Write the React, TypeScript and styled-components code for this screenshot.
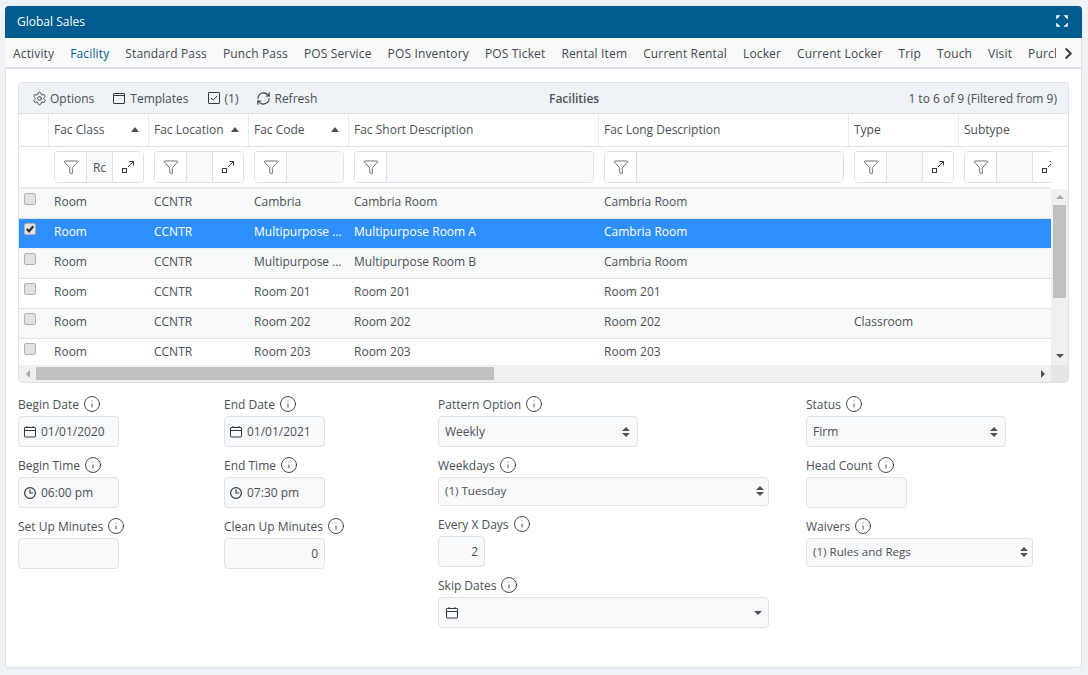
import React from "react";
import styled, { createGlobalStyle } from "styled-components";
import { Settings, RefreshCw, Funnel, Info } from "lucide-react";
import { FaChevronRight } from "react-icons/fa";

const Global = createGlobalStyle`
  html, body { margin: 0; padding: 0; background: #eff2f7; }
  body { font-family: "Open Sans", "Liberation Sans", sans-serif; font-size: 12px; color: #495057; }
  * { box-sizing: border-box; }
`;

const Page = styled.div`
  width: 1088px;
  height: 675px;
  padding: 6px 6px 7px 5px;
  overflow: hidden;
`;
const Panel = styled.section`
  height: 100%;
  display: flex;
  flex-direction: column;
  background: #fff;
  border: 1px solid #dee2e6;
  border-top: 0;
  border-radius: 4px;
`;
const TitleBar = styled.header`
  height: 32px;
  flex: none;
  margin: 0 -1px;
  padding: 0 14px 2px 12px;
  display: flex;
  align-items: center;
  justify-content: space-between;
  background: #005c8f;
  color: #fff;
  font-size: 12px;
  font-weight: 500;
  border-radius: 4px 4px 0 0;
`;
const TabBar = styled.nav`
  height: 31px;
  flex: none;
  margin-left: -1px;
  display: flex;
  align-items: stretch;
  background: #f8f9fa;
  border-bottom: 2px solid #dee2e6;
`;
const TabScroll = styled.div`
  width: 1051px;
  flex: none;
  display: flex;
  overflow: hidden;
`;
const Tab = styled.div<{ $active?: boolean }>`
  flex: none;
  height: 31px;
  padding: 2px 8px 0;
  display: flex;
  align-items: center;
  font-size: 12px;
  font-weight: 500;
  letter-spacing: 0.15px;
  white-space: nowrap;
  color: ${(p) => (p.$active ? "#005c8f" : "#41484f")};
  border-bottom: 2px solid ${(p) => (p.$active ? "#005c8f" : "transparent")};
`;
const TabNext = styled.div`
  flex: 1;
  display: flex;
  align-items: center;
  justify-content: center;
  padding-top: 1px;
  color: #343a40;
`;
const Content = styled.div`
  flex: 1;
  padding: 13px 12px 0 12px;
  display: flex;
  flex-direction: column;
`;
const Grid = styled.div`
  width: 1051px;
  height: 301px;
  flex: none;
  border: 1px solid #dee2e6;
  border-radius: 4px;
  display: flex;
  flex-direction: column;
  overflow: hidden;
  background: #fff;
`;
const Toolbar = styled.div`
  height: 31px;
  flex: none;
  background: #eff2f7;
  border-bottom: 1px solid #dee2e6;
  display: flex;
  align-items: center;
  padding: 0 11px 0 13px;
`;
const ToolGroup = styled.div`
  width: 517px;
  flex: none;
  display: flex;
  align-items: center;
  gap: 18px;
`;
const ToolButton = styled.div`
  display: flex;
  align-items: center;
  gap: 3px;
  font-size: 12px;
  font-weight: 500;
  white-space: nowrap;
  svg { flex: none; color: #343a40; }
`;
const GridTitle = styled.div`
  font-size: 12px;
  font-weight: 600;
`;
const Pager = styled.div`
  margin-left: auto;
  font-size: 12px;
  font-weight: 500;
  white-space: nowrap;
`;
const HeaderRow = styled.div`
  height: 33px;
  flex: none;
  display: flex;
  overflow: hidden;
  border-bottom: 1px solid #dee2e6;
`;
const HeaderCell = styled.div<{ $w: number }>`
  flex: 0 0 ${(p) => p.$w}px;
  display: flex;
  align-items: center;
  justify-content: space-between;
  padding: 0 9px 1px 5px;
  font-size: 12px;
  font-weight: 500;
  white-space: nowrap;
  border-right: 1px solid #e9ecef;
`;
const SortUp = styled.span`
  width: 0;
  height: 0;
  border: 4px solid transparent;
  border-top: 0;
  border-bottom: 5px solid #495057;
`;
const FilterViewport = styled.div`
  width: 1032px;
  height: 42px;
  flex: none;
  display: flex;
  overflow: hidden;
  border-bottom: 2px solid #e9ecef;
`;
const FilterCell = styled.div<{ $w: number }>`
  flex: 0 0 ${(p) => p.$w}px;
  padding: 4px 5px;
`;
const FilterBox = styled.div`
  height: 32px;
  display: flex;
  border: 1px solid #dee2e6;
  border-radius: 4px;
  overflow: hidden;
`;
const FilterIcon = styled.div<{ $w: number }>`
  flex: 0 0 ${(p) => p.$w}px;
  display: flex;
  align-items: center;
  justify-content: center;
  background: #fff;
  color: #343a40;
`;
const FilterInput = styled.div`
  flex: 1;
  min-width: 0;
  overflow: hidden;
  display: flex;
  align-items: center;
  justify-content: center;
  background: #f8f9fa;
  border-left: 1px solid #dee2e6;
  border-right: 1px solid #dee2e6;
  font-size: 12px;
  font-weight: 500;
  &:last-child { border-right: 0; }
`;
const BodyArea = styled.div`
  height: 176px;
  flex: none;
  display: flex;
`;
const Rows = styled.div`
  width: 1032px;
  flex: none;
  overflow: hidden;
`;
const Row = styled.div<{ $kind: "odd" | "even" | "sel" }>`
  height: 30px;
  display: flex;
  align-items: center;
  padding-bottom: 4px;
  font-size: 12px;
  font-weight: 500;
  border-bottom: 1px solid ${(p) => (p.$kind === "sel" ? "#eef1f5" : "#dee2e6")};
  color: ${(p) => (p.$kind === "sel" ? "#fff" : "#495057")};
  background: ${(p) => (p.$kind === "sel" ? "#2e8fff" : p.$kind === "odd" ? "#f8f9f9" : "#fff")};
`;
const Cell = styled.div<{ $w: number }>`
  flex: 0 0 ${(p) => p.$w}px;
  padding: 0 5px;
  overflow: hidden;
  text-overflow: ellipsis;
  white-space: nowrap;
`;
const CheckCell = styled.div`
  flex: 0 0 30px;
  align-self: flex-start;
  padding: 4px 0 0 5px;
`;
const CheckBox = styled.span`
  display: flex;
  align-items: center;
  justify-content: center;
  width: 12px;
  height: 12px;
  background: #e1e1e1;
  border: 1px solid #b5b0b0;
  border-radius: 2px;
`;
const VScroll = styled.div`
  flex: 1;
  display: flex;
  flex-direction: column;
  align-items: center;
  justify-content: space-between;
  background: #f0f0f0;
  padding: 6px 0 7px;
`;
const VThumb = styled.div`
  width: 13px;
  height: 93px;
  background: #c0c0c0;
  margin-top: 6px;
  margin-bottom: auto;
`;
const HScroll = styled.div`
  height: 17px;
  flex: none;
  display: flex;
  align-items: center;
  background: #f0f0f0;
`;
const HArrow = styled.div`
  flex: 0 0 17px;
  display: flex;
  justify-content: center;
`;
const HThumb = styled.div`
  width: 458px;
  height: 13px;
  background: #c0c0c0;
`;
const HTrack = styled.div`
  flex: 1;
`;
const Arrow = styled.span<{ $dir: "up" | "down" | "left" | "right"; $light?: boolean }>`
  display: block;
  width: 0;
  height: 0;
  border: 4px solid transparent;
  ${(p) => {
    const c = p.$light ? "#a9a6a8" : "#505050";
    if (p.$dir === "up") return `border-top:0;border-bottom:4px solid ${c};`;
    if (p.$dir === "down") return `border-bottom:0;border-top:4px solid ${c};`;
    if (p.$dir === "left") return `border-left:0;border-right:4px solid ${c};`;
    return `border-right:0;border-left:4px solid ${c};`;
  }}
`;
const Corner = styled.div`
  flex: 0 0 17px;
  height: 17px;
  background: #e4e6e8;
`;
const Form = styled.div`
  margin-top: 9px;
  display: grid;
  grid-template-columns: 206px 214px 368px 1fr;
`;
const FormColumn = styled.div`
  display: flex;
  flex-direction: column;
`;
const Field = styled.div`
  margin-bottom: 6px;
`;
const Label = styled.div`
  height: 24px;
  display: flex;
  align-items: center;
  gap: 4px;
  font-size: 12px;
  font-weight: 500;
  white-space: nowrap;
  svg { flex: none; color: #212529; }
`;
const Control = styled.div<{ $w: number; $right?: boolean; $tight?: boolean }>`
  width: ${(p) => p.$w}px;
  height: ${(p) => (p.$tight ? 29 : 31)}px;
  display: flex;
  align-items: center;
  justify-content: ${(p) => (p.$right ? "flex-end" : "space-between")};
  padding: ${(p) => (p.$tight ? "0 4px 2px 6px" : "0 6px")};
  background: #f8f9fa;
  border: 1px solid #dee2e6;
  border-radius: 4px;
  font-size: ${(p) => (p.$tight ? 11.6 : 12)}px;
  font-weight: 500;
  svg { flex: none; color: #343a40; }
`;
const WithIcon = styled.span`
  display: flex;
  align-items: center;
  gap: 3px;
  margin-left: -3px;
`;
const SkipIcon = styled.span`
  display: flex;
  margin-left: -1px;
`;
const Spinner = styled.span<{ $tight?: boolean }>`
  display: flex;
  flex-direction: column;
  gap: 2px;
  margin-right: ${(p) => (p.$tight ? 0 : 1)}px;
`;
const Caret = styled.span`
  width: 0;
  height: 0;
  border: 4px solid transparent;
  border-bottom: 0;
  border-top: 4px solid #495057;
`;

const FullscreenIcon = () => (
  <svg width="12" height="12" viewBox="0 0 12 12" fill="#fff" stroke="#fff" strokeWidth="0.5">
    <path d="M.5.5h3.5l-3.5 3.5zM11.5.5v3.5l-3.5-3.5zM11.5 11.5h-3.5l3.5-3.5zM.5 11.5v-3.5l3.5 3.5z" />
  </svg>
);
const ExpandIcon = () => (
  <svg width="14" height="14" viewBox="0 0 14 14" fill="none" stroke="#343a40" strokeWidth="1">
    <rect x="1.5" y="8.5" width="4" height="4" />
    <path d="M7 7l5.5-5.5M8.5 1.5h4v4" />
  </svg>
);
const WindowIcon = () => (
  <svg width="15" height="15" viewBox="0 0 15 15" fill="none" stroke="#343a40" strokeWidth="1">
    <rect x="1.5" y="2.5" width="11" height="10" rx=".5" />
    <path d="M1.5 4.5h11" />
  </svg>
);
const CheckSquareIcon = () => (
  <svg width="15" height="15" viewBox="0 0 15 15" fill="none" stroke="#343a40" strokeWidth="1">
    <rect x="1.5" y="1.5" width="11" height="11" rx=".5" />
    <path d="M4 7l2.2 2.2L10 5" />
  </svg>
);
const CalendarIcon = () => (
  <svg width="16" height="16" viewBox="0 0 16 16" fill="none" stroke="#343a40" strokeWidth="1">
    <rect x="2.5" y="3.5" width="11" height="9.5" rx=".5" />
    <path d="M2.5 6.5h11M5 2v1.5M11 2v1.5" />
  </svg>
);
const ClockIcon = () => (
  <svg width="16" height="16" viewBox="0 0 16 16" fill="none" stroke="#343a40" strokeWidth="1.2">
    <circle cx="8" cy="8" r="5.4" />
    <path d="M8 4.5V8h3.2" />
  </svg>
);
const UpDown = ({ tight }: { tight?: boolean }) => (
  <Spinner $tight={tight}>
    <Arrow $dir="up" />
    <Arrow $dir="down" />
  </Spinner>
);
const Check = () => (
  <svg width="10" height="10" viewBox="0 0 11 11" fill="none" stroke="#333" strokeWidth="2.4">
    <path d="M2 5.5l2.5 2.5L9 2.5" />
  </svg>
);
const Hint = () => <Info size={18} strokeWidth={1.1} />;

const columns = [
  { title: "Fac Class", w: 100, sort: true, expand: true, value: "Rc" },
  { title: "Fac Location", w: 100, sort: true, expand: true, value: "" },
  { title: "Fac Code", w: 100, sort: true, expand: false, value: "" },
  { title: "Fac Short Description", w: 250, sort: false, expand: false, value: "" },
  { title: "Fac Long Description", w: 250, sort: false, expand: false, value: "" },
  { title: "Type", w: 110, sort: false, expand: true, value: "" },
  { title: "Subtype", w: 110, sort: false, expand: true, value: "" },
];

const rows = [
  ["Room", "CCNTR", "Cambria", "Cambria Room", "Cambria Room", ""],
  ["Room", "CCNTR", "Multipurpose Room A", "Multipurpose Room A", "Cambria Room", ""],
  ["Room", "CCNTR", "Multipurpose Room B", "Multipurpose Room B", "Cambria Room", ""],
  ["Room", "CCNTR", "Room 201", "Room 201", "Room 201", ""],
  ["Room", "CCNTR", "Room 202", "Room 202", "Room 202", "Classroom"],
  ["Room", "CCNTR", "Room 203", "Room 203", "Room 203", ""],
];

const tabs = ["Activity", "Facility", "Standard Pass", "Punch Pass", "POS Service", "POS Inventory", "POS Ticket", "Rental Item", "Current Rental", "Locker", "Current Locker", "Trip", "Touch", "Visit", "Purchase"];

export default function App() {
  return (
    <Page>
      <Global />
      <Panel>
        <TitleBar>
          <span>Global Sales</span>
          <FullscreenIcon />
        </TitleBar>
        <TabBar>
          <TabScroll>
            {tabs.map((t) => (
              <Tab key={t} $active={t === "Facility"}>{t}</Tab>
            ))}
          </TabScroll>
          <TabNext><FaChevronRight size={13} /></TabNext>
        </TabBar>
        <Content>
          <Grid>
            <Toolbar>
              <ToolGroup>
                <ToolButton><Settings size={15} strokeWidth={1.4} />Options</ToolButton>
                <ToolButton><WindowIcon />Templates</ToolButton>
                <ToolButton><CheckSquareIcon />(1)</ToolButton>
                <ToolButton><RefreshCw size={15} strokeWidth={1.7} />Refresh</ToolButton>
              </ToolGroup>
              <GridTitle>Facilities</GridTitle>
              <Pager>1 to 6 of 9 (Filtered from 9)</Pager>
            </Toolbar>
            <HeaderRow>
              <HeaderCell $w={30} />
              {columns.map((c) => (
                <HeaderCell key={c.title} $w={c.w}>
                  {c.title}
                  {c.sort && <SortUp />}
                </HeaderCell>
              ))}
            </HeaderRow>
            <FilterViewport>
              <FilterCell $w={30} />
              {columns.map((c) => (
                <FilterCell key={c.title} $w={c.w}>
                  <FilterBox>
                    <FilterIcon $w={31}><Funnel size={16} strokeWidth={1.1} /></FilterIcon>
                    <FilterInput>{c.value}</FilterInput>
                    {c.expand && <FilterIcon $w={30}><ExpandIcon /></FilterIcon>}
                  </FilterBox>
                </FilterCell>
              ))}
            </FilterViewport>
            <BodyArea>
              <Rows>
                {rows.map((r, i) => (
                  <Row key={i} $kind={i === 1 ? "sel" : i % 2 === 0 ? "odd" : "even"}>
                    <CheckCell>
                      <CheckBox>{i === 1 && <Check />}</CheckBox>
                    </CheckCell>
                    {r.map((v, j) => (
                      <Cell key={j} $w={columns[j].w}>{v}</Cell>
                    ))}
                  </Row>
                ))}
              </Rows>
              <VScroll>
                <Arrow $dir="up" $light />
                <VThumb />
                <Arrow $dir="down" />
              </VScroll>
            </BodyArea>
            <HScroll>
              <HArrow><Arrow $dir="left" $light /></HArrow>
              <HThumb />
              <HTrack />
              <HArrow><Arrow $dir="right" /></HArrow>
              <Corner />
            </HScroll>
          </Grid>
          <Form>
            <FormColumn>
              <Field>
                <Label>Begin Date <Hint /></Label>
                <Control $w={101}><WithIcon><CalendarIcon />01/01/2020</WithIcon></Control>
              </Field>
              <Field>
                <Label>Begin Time <Hint /></Label>
                <Control $w={101}><WithIcon><ClockIcon />06:00 pm</WithIcon></Control>
              </Field>
              <Field>
                <Label>Set Up Minutes <Hint /></Label>
                <Control $w={101} />
              </Field>
            </FormColumn>
            <FormColumn>
              <Field>
                <Label>End Date <Hint /></Label>
                <Control $w={101}><WithIcon><CalendarIcon />01/01/2021</WithIcon></Control>
              </Field>
              <Field>
                <Label>End Time <Hint /></Label>
                <Control $w={101}><WithIcon><ClockIcon />07:30 pm</WithIcon></Control>
              </Field>
              <Field>
                <Label>Clean Up Minutes <Hint /></Label>
                <Control $w={101} $right>0</Control>
              </Field>
            </FormColumn>
            <FormColumn>
              <Field>
                <Label>Pattern Option <Hint /></Label>
                <Control $w={200}>Weekly<UpDown /></Control>
              </Field>
              <Field>
                <Label>Weekdays <Hint /></Label>
                <Control $w={331} $tight>(1) Tuesday<UpDown tight /></Control>
              </Field>
              <Field>
                <Label>Every X Days <Hint /></Label>
                <Control $w={47} $right>2</Control>
              </Field>
              <Field>
                <Label>Skip Dates <Hint /></Label>
                <Control $w={331}><SkipIcon><CalendarIcon /></SkipIcon><Caret /></Control>
              </Field>
            </FormColumn>
            <FormColumn>
              <Field>
                <Label>Status <Hint /></Label>
                <Control $w={200}>Firm<UpDown /></Control>
              </Field>
              <Field>
                <Label>Head Count <Hint /></Label>
                <Control $w={101} />
              </Field>
              <Field>
                <Label>Waivers <Hint /></Label>
                <Control $w={227} $tight>(1) Rules and Regs<UpDown tight /></Control>
              </Field>
            </FormColumn>
          </Form>
        </Content>
      </Panel>
    </Page>
  );
}
